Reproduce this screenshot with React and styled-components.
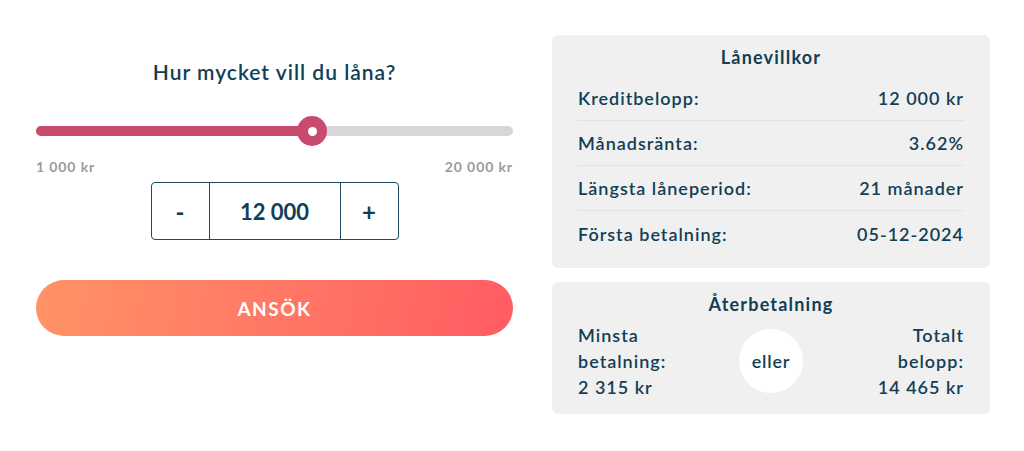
import React, { useState } from 'react';
import styled, { createGlobalStyle } from 'styled-components';

const GlobalStyle = createGlobalStyle`
  body {
    margin: 0;
    background: #ffffff;
    font-family: Lato, "Noto Sans", sans-serif;
    color: #123e56;
  }
`;

const Page = styled.div`
  display: flex;
  align-items: flex-start;
  gap: 39px;
  padding: 0 34px 0 36px;
  height: 451px;
  box-sizing: border-box;
`;

const LeftCol = styled.div`
  width: 477px;
  display: flex;
  flex-direction: column;
  align-items: stretch;
  padding-top: 60px;
`;

const Title = styled.h2`
  margin: 0;
  font-size: 21px;
  line-height: 24px;
  font-weight: 600;
  text-align: center;
  letter-spacing: 1px;
`;

const SliderWrap = styled.div`
  position: relative;
  height: 30px;
  margin-top: 32px;
  display: flex;
  align-items: center;
`;

const Track = styled.div`
  width: 100%;
  height: 10px;
  border-radius: 5px;
  background: #d7d7db;
  overflow: hidden;
`;

const Fill = styled.div`
  height: 100%;
  background: #c84b6e;
`;

const Thumb = styled.div`
  position: absolute;
  top: 0;
  width: 30px;
  height: 30px;
  margin-left: -15px;
  border-radius: 50%;
  background: #c84b6e;
  display: flex;
  align-items: center;
  justify-content: center;

  &::after {
    content: '';
    width: 9px;
    height: 9px;
    border-radius: 50%;
    background: #ffffff;
  }
`;

const Limits = styled.div`
  display: flex;
  justify-content: space-between;
  margin-top: 13px;
  font-size: 14px;
  line-height: 16px;
  font-weight: 700;
  letter-spacing: 0.9px;
  color: #9b9b9b;
`;

const Counter = styled.div`
  align-self: center;
  display: flex;
  height: 58px;
  margin-top: 7px;
  border: 1px solid #1d4a62;
  border-radius: 4px;
  box-sizing: border-box;
`;

const StepButton = styled.button`
  width: 58px;
  border: none;
  background: transparent;
  font-family: inherit;
  font-size: 24px;
  font-weight: 700;
  color: #123e56;
  cursor: pointer;
  ${(p) => (p.$left ? 'border-right: 1px solid #1d4a62;' : 'border-left: 1px solid #1d4a62;')}
`;

const Amount = styled.div`
  width: 130px;
  display: flex;
  align-items: center;
  justify-content: center;
  font-size: 22px;
  font-weight: 700;
`;

const ApplyButton = styled.button`
  margin-top: 40px;
  height: 56px;
  border: none;
  border-radius: 28px;
  background: linear-gradient(100deg, #ff9366 0%, #ff7865 50%, #ff5c62 100%);
  color: #ffffff;
  font-family: inherit;
  font-size: 19px;
  font-weight: 700;
  letter-spacing: 1.5px;
  cursor: pointer;
`;

const RightCol = styled.div`
  width: 438px;
  display: flex;
  flex-direction: column;
  gap: 14px;
  padding-top: 35px;
`;

const Card = styled.div`
  background: #f0f0f0;
  border-radius: 6px;
  padding: ${(p) => p.$pad || '12px 26px'};
`;

const CardTitle = styled.h3`
  margin: 0;
  font-size: 18px;
  line-height: 20px;
  font-weight: 700;
  letter-spacing: 1.2px;
  text-align: center;
`;

const Rows = styled.div`
  margin-top: 9px;
`;

const Row = styled.div`
  display: flex;
  justify-content: space-between;
  align-items: center;
  height: 45px;
  font-size: 18px;
  font-weight: 600;
  letter-spacing: 1px;
  border-bottom: 1px solid #dde5ea;
  box-sizing: border-box;

  &:last-child {
    border-bottom: none;
  }
`;

const Repay = styled.div`
  display: flex;
  justify-content: space-between;
  align-items: center;
  margin-top: 8px;
`;

const RepayText = styled.div`
  font-size: 18px;
  line-height: 26px;
  font-weight: 600;
  letter-spacing: 1px;
  text-align: ${(p) => (p.$right ? 'right' : 'left')};
  width: 120px;
`;

const Or = styled.div`
  width: 64px;
  height: 64px;
  border-radius: 50%;
  background: #ffffff;
  display: flex;
  align-items: center;
  justify-content: center;
  font-size: 18px;
  font-weight: 600;
  letter-spacing: 0.8px;
`;

const MIN = 1000;
const MAX = 20000;

const terms = [
  { label: 'Kreditbelopp:', value: '12 000 kr' },
  { label: 'Månadsränta:', value: '3.62%' },
  { label: 'Längsta låneperiod:', value: '21 månader' },
  { label: 'Första betalning:', value: '05-12-2024' },
];

const fmt = (n) => n.toLocaleString('sv-SE').replace(/\u00a0/g, ' ');

function App() {
  const [amount, setAmount] = useState(12000);
  const pct = ((amount - MIN) / (MAX - MIN)) * 100;

  const step = (d) => setAmount((a) => Math.min(MAX, Math.max(MIN, a + d)));

  return (
    <>
      <GlobalStyle />
      <Page>
        <LeftCol>
          <Title>Hur mycket vill du låna?</Title>
          <SliderWrap>
            <Track>
              <Fill style={{ width: `${pct}%` }} />
            </Track>
            <Thumb style={{ left: `${pct}%` }} />
          </SliderWrap>
          <Limits>
            <span>1 000 kr</span>
            <span>20 000 kr</span>
          </Limits>
          <Counter>
            <StepButton $left onClick={() => step(-1000)}>-</StepButton>
            <Amount>{fmt(amount)}</Amount>
            <StepButton onClick={() => step(1000)}>+</StepButton>
          </Counter>
          <ApplyButton>ANSÖK</ApplyButton>
        </LeftCol>

        <RightCol>
          <Card>
            <CardTitle>Lånevillkor</CardTitle>
            <Rows>
              {terms.map((t) => (
                <Row key={t.label}>
                  <span>{t.label}</span>
                  <span>{t.value}</span>
                </Row>
              ))}
            </Rows>
          </Card>
          <Card $pad="12px 26px 14px">
            <CardTitle>Återbetalning</CardTitle>
            <Repay>
              <RepayText>
                Minsta<br />betalning:<br />2 315 kr
              </RepayText>
              <Or>eller</Or>
              <RepayText $right>
                Totalt<br />belopp:<br />14 465 kr
              </RepayText>
            </Repay>
          </Card>
        </RightCol>
      </Page>
    </>
  );
}

export default App;
